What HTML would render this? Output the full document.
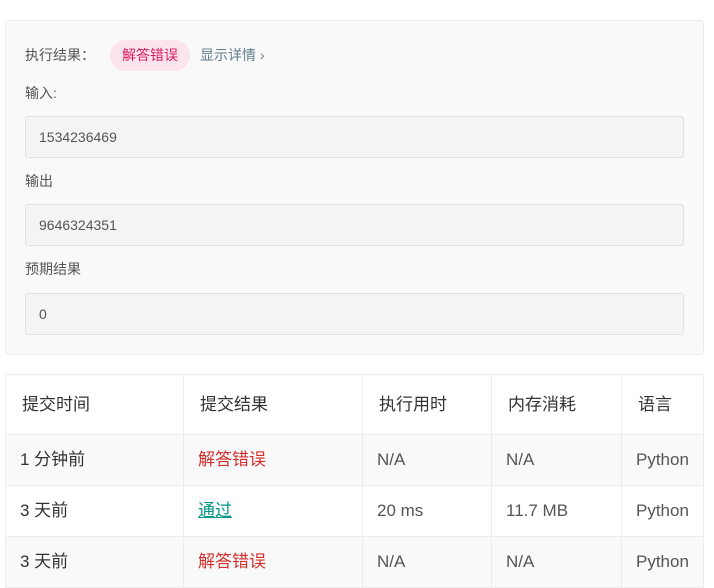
<!DOCTYPE html>
<html><head><meta charset="utf-8"><style>
*{margin:0;padding:0;box-sizing:border-box}
body{width:714px;height:584px;background:#fff;font-family:"Liberation Sans","Noto Sans CJK SC",sans-serif;overflow:hidden;position:relative}
.panel{position:absolute;left:5px;top:20px;width:699px;height:335px;background:#f9f9f9;border:1px solid #ececec;border-radius:4px}
.lbl{position:absolute;left:19px;font-size:14px;color:#555;line-height:20px}
.box{position:absolute;left:19px;width:659px;height:42px;background:#f4f4f4;border:1px solid #e0e0e0;border-radius:3px;font-size:14px;color:#555;padding-left:13px;line-height:40px}
.tag{position:absolute;left:104px;top:19px;width:80px;height:31px;border-radius:16px;background:#fce4ec;color:#d81b60;font-size:14px;text-align:center;line-height:31px}
.det{position:absolute;left:194px;top:24px;font-size:14px;color:#607d8b;line-height:20px}
table{position:absolute;left:5px;top:374px;border-collapse:collapse;font-size:17px;color:#333;table-layout:fixed;width:698px}
td{border:1px solid #ececec;padding:0 0 0 14px;height:51px;line-height:20px;vertical-align:middle;white-space:nowrap}
tr.h td{height:60px;padding-left:16px}
tr.g td{background:#f9f9f9}
.red{color:#d32f2f}.grn{color:#009688;text-decoration:underline;text-decoration-thickness:1px}
.n{color:#555}
</style></head><body>
<div class="panel">
<div class="lbl" style="top:24px">执行结果：</div>
<div class="tag">解答错误</div>
<div class="det">显示详情 ›</div>
<div class="lbl" style="top:62px">输入:</div>
<div class="box" style="top:95px">1534236469</div>
<div class="lbl" style="top:150px">输出</div>
<div class="box" style="top:183px">9646324351</div>
<div class="lbl" style="top:238px">预期结果</div>
<div class="box" style="top:272px">0</div>
</div>
<table>
<colgroup><col style="width:178px"><col style="width:179px"><col style="width:129px"><col style="width:130px"><col style="width:82px"></colgroup>
<tr class="h"><td>提交时间</td><td>提交结果</td><td>执行用时</td><td>内存消耗</td><td>语言</td></tr>
<tr class="g"><td>1 分钟前</td><td class="red">解答错误</td><td class="n">N/A</td><td class="n">N/A</td><td class="n">Python</td></tr>
<tr><td>3 天前</td><td><span class="grn">通过</span></td><td class="n">20 ms</td><td class="n">11.7 MB</td><td class="n">Python</td></tr>
<tr class="g"><td>3 天前</td><td class="red">解答错误</td><td class="n">N/A</td><td class="n">N/A</td><td class="n">Python</td></tr>
</table>
</body></html>
